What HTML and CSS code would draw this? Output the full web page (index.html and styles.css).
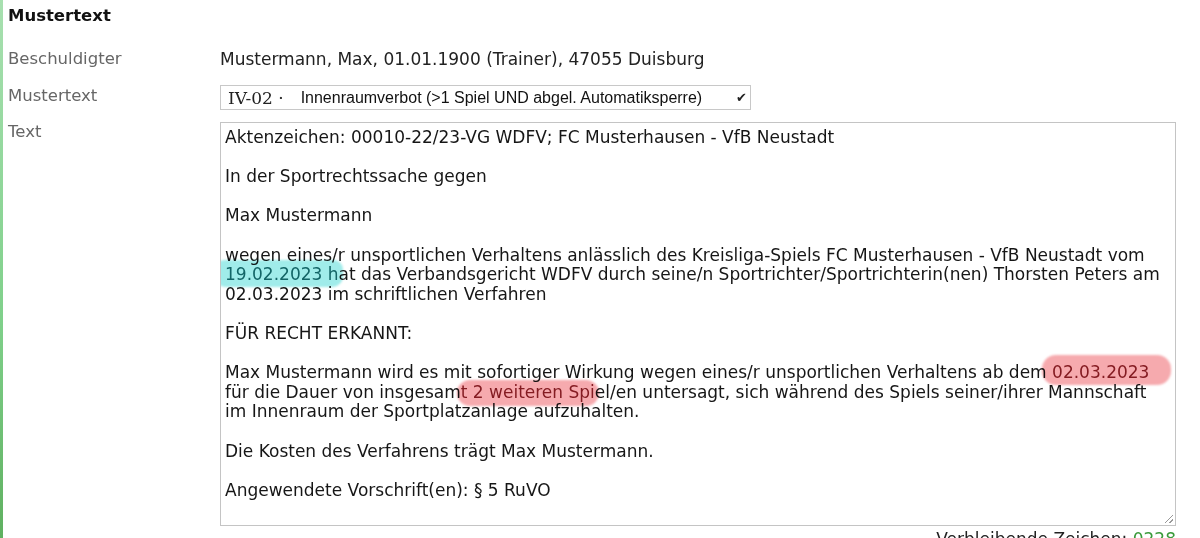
FILE: index.html
```html
<!DOCTYPE html>
<html lang="de">
<head>
  <meta charset="UTF-8" />
  <title>Mustertext</title>
  <link rel="stylesheet" href="styles.css">
</head>
<body>

<div class="page">
  <div class="heading">Mustertext</div>

  <div class="form">
    <div class="label">Beschuldigter</div>
    <div class="value plain">Mustermann, Max, 01.01.1900 (Trainer), 47055 Duisburg</div>

    <div class="label">Mustertext</div>
    <div class="value">
      <div class="select">
        <span class="code">IV-02 ·</span>
        <span class="option">Innenraumverbot (&gt;1 Spiel UND abgel. Automatiksperre)</span>
        <span class="check">✔</span>
      </div>
    </div>

    <div class="label label-text">Text</div>
    <div class="value">
      <div class="textarea">Aktenzeichen: 00010-22/23-VG WDFV; FC Musterhausen - VfB Neustadt

In der Sportrechtssache gegen

Max Mustermann

wegen eines/r unsportlichen Verhaltens anlässlich des Kreisliga-Spiels FC Musterhausen - VfB Neustadt vom
<span class="mark cyan">19.02.2023 h</span>at das Verbandsgericht WDFV durch seine/n Sportrichter/Sportrichterin(nen) Thorsten Peters am
02.03.2023 im schriftlichen Verfahren

FÜR RECHT ERKANNT:

Max Mustermann wird es mit sofortiger Wirkung wegen eines/r unsportlichen Verhaltens ab dem <span class="mark pink wide">02.03.2023</span>
für die Dauer von insgesam<span class="mark pink">t 2 weiteren Spi</span>el/en untersagt, sich während des Spiels seiner/ihrer Mannschaft
im Innenraum der Sportplatzanlage aufzuhalten.

Die Kosten des Verfahrens trägt Max Mustermann.

Angewendete Vorschrift(en): § 5 RuVO
<span class="grip"></span></div>
      <div class="counter">Verbleibende Zeichen: <span class="count">0228</span></div>
    </div>
  </div>
</div>

</body>
</html>
```

FILE: styles.css
```css
* {
  box-sizing: border-box;
}

html, body {
  margin: 0;
  padding: 0;
  height: 100%;
  background: white;
  font-family: 'DejaVu Sans', Verdana, sans-serif;
  overflow: hidden;
}

.page {
  height: 100%;
  border-left: 3px solid #7cc97c;
  border-image: linear-gradient(#a8e0b0, #7fd08a 60%, #5fb060) 1;
  padding: 5px 24px 0 5px;
}

.heading {
  font-size: 16.5px;
  font-weight: bold;
  color: #111;
  line-height: 22px;
  margin-bottom: 21px;
}

.form {
  display: grid;
  grid-template-columns: 212px 1fr;
  row-gap: 12px;
  align-items: start;
}

.label {
  font-size: 16.5px;
  color: #666;
  line-height: 22px;
}

.label-text {
  margin-top: -1px;
}

.value {
  font-size: 17px;
  color: #222;
}

.value.plain {
  line-height: 22px;
  margin-bottom: 3px;
}

.select {
  display: flex;
  align-items: center;
  width: 531px;
  height: 25px;
  border: 1px solid #c8c8c8;
  padding: 0 3px 0 7px;
  background: white;
}

.code {
  font-family: 'DejaVu Serif', serif;
  font-size: 17px;
  color: #222;
  margin-right: 17px;
}

.option {
  font-family: 'Liberation Sans', Arial, sans-serif;
  font-size: 16px;
  color: #111;
  flex: 1;
}

.check {
  font-size: 13px;
  color: #222;
}

.textarea {
  position: relative;
  width: 956px;
  height: 404px;
  border: 1px solid #c4c4c4;
  padding: 5px 4px;
  white-space: pre-wrap;
  line-height: 19.6px;
  font-size: 17px;
  color: #161616;
  overflow: hidden;
}

.mark {
  position: relative;
}

.mark::before {
  content: "";
  position: absolute;
  left: -4px;
  right: -4px;
  top: -2px;
  bottom: -4px;
  border-radius: 14px;
  mix-blend-mode: multiply;
  filter: blur(1.2px);
}

.mark.cyan {
  color: #1d6d70;
}

.mark.cyan::before {
  left: -13px;
  right: -4px;
  top: -4px;
  bottom: -3px;
  background: #a0ecea;
  border-radius: 16px 12px 14px 18px;
}

.mark.pink {
  color: #8a2a32;
}

.mark.pink::before {
  background: #f6aaae;
}

.mark.pink.wide::before {
  left: -10px;
  right: -22px;
  top: -7px;
  bottom: -3px;
}

.grip {
  position: absolute;
  right: 2px;
  bottom: 2px;
  width: 8px;
  height: 8px;
  background: linear-gradient(135deg, transparent 45%, #999 45%, #999 55%, transparent 55%, transparent 75%, #999 75%, #999 85%, transparent 85%);
}

.counter {
  width: 956px;
  text-align: right;
  font-size: 17px;
  color: #222;
  margin-top: 3px;
}

.count {
  color: #3a9a3a;
}
```
